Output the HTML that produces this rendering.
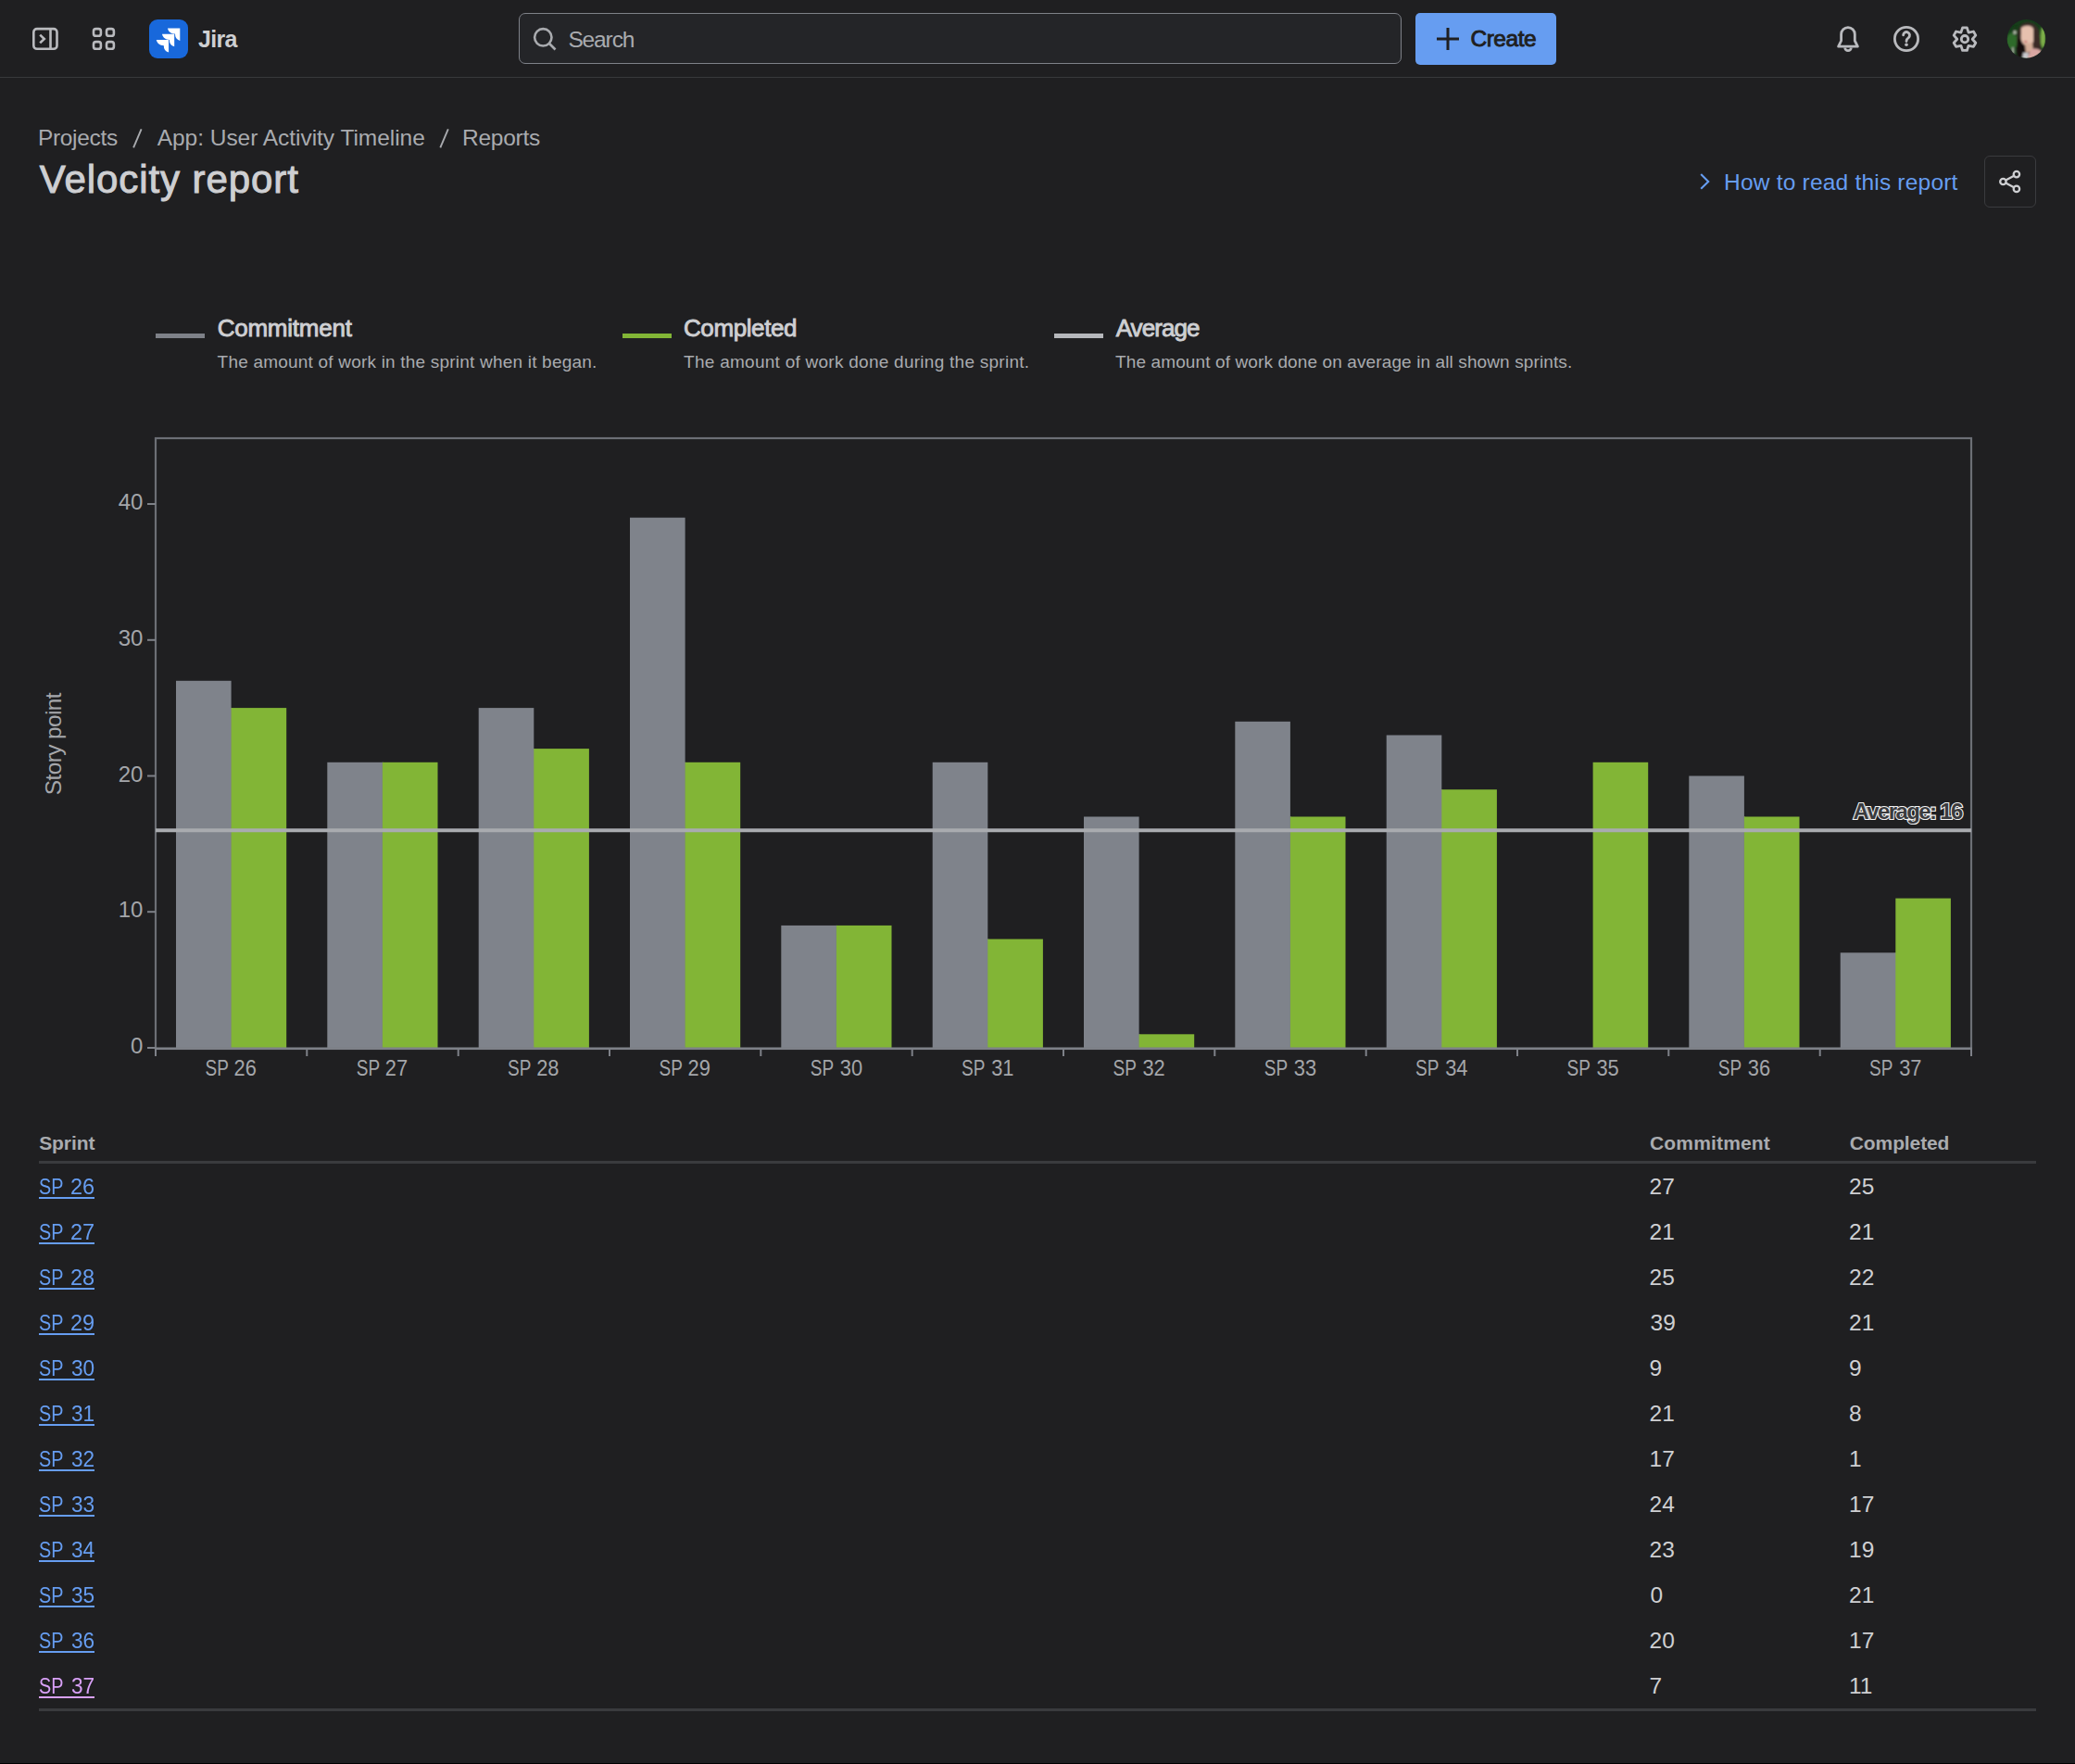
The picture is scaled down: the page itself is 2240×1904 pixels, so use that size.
<!DOCTYPE html>
<html>
<head>
<meta charset="utf-8">
<style>
html,body{margin:0;padding:0;}
body{width:2240px;height:1904px;background:#1f1f21;position:relative;overflow:hidden;font-family:"Liberation Sans",sans-serif;color:#cecfd2;}
.a{position:absolute;white-space:nowrap;line-height:1;}
#hdr{position:absolute;left:0;top:0;width:2240px;height:83px;background:#1f1f21;border-bottom:1px solid #38393b;}
#search{position:absolute;left:560px;top:14px;width:951px;height:53px;border:1.5px solid #7e8188;border-radius:7px;background:#242528;}
#create{position:absolute;left:1528px;top:14px;width:152px;height:56px;border-radius:5px;background:#669df1;}
#share{position:absolute;left:2142px;top:168px;width:53.6px;height:53.6px;border:1.2px solid #3a3b3e;border-radius:6px;}
.hline{position:absolute;height:3px;background:#3a3b3e;}
.lnk{color:#669df1;text-decoration:underline;text-decoration-thickness:2px;text-underline-offset:3px;}
</style>
</head>
<body>
<div id="hdr"></div>
<!-- header icons -->
<svg class="a" style="left:0;top:0;z-index:5" width="2240" height="84">
  <g fill="none" stroke="#b9babe" stroke-width="2.6">
    <rect x="36.3" y="31.1" width="25.2" height="21.7" rx="3.6"/>
    <line x1="54.5" y1="31" x2="54.5" y2="53"/>
    <polyline points="43.2,37.6 47.8,42 43.2,46.4"/>
    <rect x="101" y="31.1" width="7.9" height="7.7" rx="2.6"/>
    <rect x="115" y="31.1" width="7.9" height="7.7" rx="2.6"/>
    <rect x="101" y="45.1" width="7.9" height="7.7" rx="2.6"/>
    <rect x="115" y="45.1" width="7.9" height="7.7" rx="2.6"/>
  </g>
  <g transform="translate(161,21)">
    <rect x="0" y="0" width="42" height="42" rx="9" fill="#1868db"/>
    <g fill="#ffffff">
      <path d="M20 9.4 H33.3 V23 C29.6 22 28 19.5 28 15.6 C24 15.6 20.8 13.4 20 9.4 Z"/>
      <path d="M14 15.8 H27.2 V29.3 C23.5 28.3 21.9 25.8 21.9 21.9 C17.9 21.9 14.8 19.7 14 15.8 Z"/>
      <path d="M7.8 22.1 H21.1 V35.6 C17.4 34.6 15.8 32.1 15.8 28.2 C11.8 28.2 8.6 26 7.8 22.1 Z"/>
    </g>
  </g>
  <!-- search icon -->
  <g fill="none" stroke="#a9abaf" stroke-width="2.6">
    <circle cx="586.3" cy="40.3" r="9.2"/>
    <line x1="593" y1="47" x2="599.5" y2="53.5"/>
  </g>
  <!-- plus -->
  <g stroke="#1f1f21" stroke-width="3">
    <line x1="1551" y1="42" x2="1575" y2="42"/>
    <line x1="1563" y1="30" x2="1563" y2="54"/>
  </g>
  <!-- bell -->
  <g fill="none" stroke="#b9babe" stroke-width="2.8" stroke-linejoin="round">
    <path d="M1984.6 50.2 L1987.6 44 V37 A7.35 7.35 0 0 1 2002.3 37 V44 L2005.4 50.2 Z"/>
    <path d="M1991.7 51.4 A3.3 3.3 0 0 0 1998.3 51.4"/>
    <circle cx="2058" cy="42" r="12.6"/>
    <path d="M2054.6 37.8 A3.45 3.45 0 1 1 2060.3 40.6 C2058.7 41.7 2058 42.6 2058 44.6" stroke-linecap="round"/>
  </g>
  <circle cx="2058" cy="48.3" r="1.8" fill="#b9babe"/>
  <!-- gear -->
  <g fill="none" stroke="#b9babe" stroke-width="2.8" stroke-linejoin="round">
    <path d="M2116.90 35.10 L2118.61 29.93 L2123.39 29.93 L2125.10 35.10 L2130.43 34.00 L2132.82 38.13 L2129.20 42.20 L2132.82 46.27 L2130.43 50.40 L2125.10 49.30 L2123.39 54.47 L2118.61 54.47 L2116.90 49.30 L2111.57 50.40 L2109.18 46.27 L2112.80 42.20 L2109.18 38.13 L2111.57 34.00 Z"/>
    <circle cx="2121" cy="42.2" r="3.7"/>
  </g>
  <!-- avatar -->
  <defs>
    <clipPath id="avc"><circle cx="2187.5" cy="41.9" r="20.8"/></clipPath>
    <filter id="avblur" x="-10%" y="-10%" width="120%" height="120%"><feGaussianBlur stdDeviation="1.1"/></filter>
  </defs>
  <g clip-path="url(#avc)">
    <rect x="2166" y="20" width="44" height="45" fill="#173d1b"/>
    <g filter="url(#avblur)">
      <ellipse cx="2172" cy="44" rx="6" ry="9" fill="#2f6a2c"/>
      <ellipse cx="2176" cy="33" rx="4" ry="5" fill="#143a16"/>
      <ellipse cx="2175" cy="35" rx="1.8" ry="2" fill="#b9c0b0"/>
      <ellipse cx="2173" cy="55" rx="1.5" ry="4" fill="#a9b0a0"/>
      <ellipse cx="2205.5" cy="40" rx="2.8" ry="12" fill="#7fb04a"/>
      <path d="M2178 60 C2176 45 2177 30 2183 26 C2190 22 2198 25 2201 33 C2203 42 2203 52 2205 62 L2190 64 Z" fill="#3a2b27"/>
      <path d="M2178 62 C2176 50 2178 38 2182 32 L2186 40 C2184 48 2186 56 2190 64 Z" fill="#17110f"/>
      <path d="M2182 30 C2186 27 2193 27 2195 31 L2195 45 C2194 48 2190 50 2187 49 C2184 48 2182 45 2181.5 41 Z" fill="#e6c1ae"/>
      <ellipse cx="2186.8" cy="45" rx="1.6" ry="0.9" fill="#c0545a"/>
      <path d="M2186 47 L2194 46 L2195 55 L2187 57 Z" fill="#d6ad98"/>
      <path d="M2188 64 L2192 54 C2196 51 2202 53 2206 57 L2206 66 Z" fill="#d9a6a2"/>
      <path d="M2183 64 L2184 57 L2190 57 L2189 64 Z" fill="#c9c9cd"/>
    </g>
  </g>
</svg>
<div id="search"></div>
<div id="create"></div>

<!-- page header -->
<svg class="a" style="left:0;top:120px" width="600" height="50"><g stroke="#a9abaf" stroke-width="1.9"><line x1="144.1" y1="39.4" x2="152.6" y2="19.3"/><line x1="475.3" y1="39.4" x2="483.8" y2="19.3"/></g></svg>

<svg class="a" style="left:1830px;top:180px" width="24" height="32"><polyline points="6.2,8 14.2,15.9 6.2,23.8" fill="none" stroke="#669df1" stroke-width="2.1"/></svg>
<div id="share"></div>
<svg class="a" style="left:2142px;top:168px" width="56" height="56">
  <g fill="none" stroke="#cecfd2" stroke-width="2.3">
    <circle cx="20.4" cy="28" r="3.2"/>
    <circle cx="34.9" cy="20.1" r="3.2"/>
    <circle cx="34.9" cy="35.9" r="3.2"/>
    <line x1="23.2" y1="26.4" x2="32.1" y2="21.7"/>
    <line x1="23.2" y1="29.6" x2="32.1" y2="34.3"/>
  </g>
</svg>

<!-- legend -->
<div class="a" style="left:168px;top:360px;width:53px;height:5px;background:#7e8188;"></div>
<div class="a" style="left:672px;top:360px;width:53px;height:5px;background:#82b536;"></div>
<div class="a" style="left:1138px;top:360px;width:53px;height:5px;background:#b5b7bb;"></div>

<!-- CHART -->
<svg class="a" id="chart" style="left:0;top:0;font-family:'Liberation Sans',sans-serif" width="2240" height="1200">
<rect x="190.0" y="734.8" width="59.6" height="396.2" fill="#7f838b"/>
<rect x="249.1" y="764.1" width="1.5" height="366.9" fill="#7f838b"/>
<rect x="249.6" y="764.1" width="59.6" height="366.9" fill="#82b536"/>
<rect x="353.3" y="822.8" width="59.6" height="308.2" fill="#7f838b"/>
<rect x="412.4" y="822.8" width="1.5" height="308.2" fill="#7f838b"/>
<rect x="412.9" y="822.8" width="59.6" height="308.2" fill="#82b536"/>
<rect x="516.7" y="764.1" width="59.6" height="366.9" fill="#7f838b"/>
<rect x="575.8" y="808.1" width="1.5" height="322.9" fill="#7f838b"/>
<rect x="576.3" y="808.1" width="59.6" height="322.9" fill="#82b536"/>
<rect x="680.0" y="558.7" width="59.6" height="572.3" fill="#7f838b"/>
<rect x="739.1" y="822.8" width="1.5" height="308.2" fill="#7f838b"/>
<rect x="739.6" y="822.8" width="59.6" height="308.2" fill="#82b536"/>
<rect x="843.3" y="998.9" width="59.6" height="132.1" fill="#7f838b"/>
<rect x="902.4" y="998.9" width="1.5" height="132.1" fill="#7f838b"/>
<rect x="902.9" y="998.9" width="59.6" height="132.1" fill="#82b536"/>
<rect x="1006.7" y="822.8" width="59.6" height="308.2" fill="#7f838b"/>
<rect x="1065.8" y="1013.6" width="1.5" height="117.4" fill="#7f838b"/>
<rect x="1066.3" y="1013.6" width="59.6" height="117.4" fill="#82b536"/>
<rect x="1170.0" y="881.5" width="59.6" height="249.5" fill="#7f838b"/>
<rect x="1229.1" y="1116.3" width="1.5" height="14.7" fill="#7f838b"/>
<rect x="1229.6" y="1116.3" width="59.6" height="14.7" fill="#82b536"/>
<rect x="1333.3" y="778.8" width="59.6" height="352.2" fill="#7f838b"/>
<rect x="1392.4" y="881.5" width="1.5" height="249.5" fill="#7f838b"/>
<rect x="1392.9" y="881.5" width="59.6" height="249.5" fill="#82b536"/>
<rect x="1496.7" y="793.5" width="59.6" height="337.5" fill="#7f838b"/>
<rect x="1555.8" y="852.2" width="1.5" height="278.8" fill="#7f838b"/>
<rect x="1556.3" y="852.2" width="59.6" height="278.8" fill="#82b536"/>
<rect x="1719.6" y="822.8" width="59.6" height="308.2" fill="#82b536"/>
<rect x="1823.3" y="837.5" width="59.6" height="293.5" fill="#7f838b"/>
<rect x="1882.4" y="881.5" width="1.5" height="249.5" fill="#7f838b"/>
<rect x="1882.9" y="881.5" width="59.6" height="249.5" fill="#82b536"/>
<rect x="1986.7" y="1028.3" width="59.6" height="102.7" fill="#7f838b"/>
<rect x="2045.8" y="1028.3" width="1.5" height="102.7" fill="#7f838b"/>
<rect x="2046.3" y="969.6" width="59.6" height="161.4" fill="#82b536"/>
<rect x="168" y="473" width="1960" height="659" fill="none" stroke="#6c6f75" stroke-width="2.2"/>
<line x1="167" y1="1131.8" x2="2129" y2="1131.8" stroke="#7e8188" stroke-width="2.6"/>
<line x1="159" y1="1131.0" x2="168" y2="1131.0" stroke="#7e8188" stroke-width="2"/>
<line x1="159" y1="984.2" x2="168" y2="984.2" stroke="#7e8188" stroke-width="2"/>
<line x1="159" y1="837.5" x2="168" y2="837.5" stroke="#7e8188" stroke-width="2"/>
<line x1="159" y1="690.8" x2="168" y2="690.8" stroke="#7e8188" stroke-width="2"/>
<line x1="159" y1="544.0" x2="168" y2="544.0" stroke="#7e8188" stroke-width="2"/>
<line x1="168.0" y1="1132" x2="168.0" y2="1140" stroke="#7e8188" stroke-width="2"/>
<line x1="331.3" y1="1132" x2="331.3" y2="1140" stroke="#7e8188" stroke-width="2"/>
<line x1="494.7" y1="1132" x2="494.7" y2="1140" stroke="#7e8188" stroke-width="2"/>
<line x1="658.0" y1="1132" x2="658.0" y2="1140" stroke="#7e8188" stroke-width="2"/>
<line x1="821.3" y1="1132" x2="821.3" y2="1140" stroke="#7e8188" stroke-width="2"/>
<line x1="984.7" y1="1132" x2="984.7" y2="1140" stroke="#7e8188" stroke-width="2"/>
<line x1="1148.0" y1="1132" x2="1148.0" y2="1140" stroke="#7e8188" stroke-width="2"/>
<line x1="1311.3" y1="1132" x2="1311.3" y2="1140" stroke="#7e8188" stroke-width="2"/>
<line x1="1474.7" y1="1132" x2="1474.7" y2="1140" stroke="#7e8188" stroke-width="2"/>
<line x1="1638.0" y1="1132" x2="1638.0" y2="1140" stroke="#7e8188" stroke-width="2"/>
<line x1="1801.3" y1="1132" x2="1801.3" y2="1140" stroke="#7e8188" stroke-width="2"/>
<line x1="1964.7" y1="1132" x2="1964.7" y2="1140" stroke="#7e8188" stroke-width="2"/>
<line x1="2128.0" y1="1132" x2="2128.0" y2="1140" stroke="#7e8188" stroke-width="2"/>
<text transform="translate(221.46,1161.3) scale(0.809,1)" font-size="23.5" fill="#a4a6aa">SP</text>
<text transform="translate(252.54,1161.3) scale(0.93,1)" font-size="23.5" fill="#a4a6aa">26</text>
<text transform="translate(384.79,1161.3) scale(0.809,1)" font-size="23.5" fill="#a4a6aa">SP</text>
<text transform="translate(415.87,1161.3) scale(0.93,1)" font-size="23.5" fill="#a4a6aa">27</text>
<text transform="translate(548.12,1161.3) scale(0.809,1)" font-size="23.5" fill="#a4a6aa">SP</text>
<text transform="translate(579.20,1161.3) scale(0.93,1)" font-size="23.5" fill="#a4a6aa">28</text>
<text transform="translate(711.46,1161.3) scale(0.809,1)" font-size="23.5" fill="#a4a6aa">SP</text>
<text transform="translate(742.54,1161.3) scale(0.93,1)" font-size="23.5" fill="#a4a6aa">29</text>
<text transform="translate(874.79,1161.3) scale(0.809,1)" font-size="23.5" fill="#a4a6aa">SP</text>
<text transform="translate(906.80,1161.3) scale(0.93,1)" font-size="23.5" fill="#a4a6aa">30</text>
<text transform="translate(1038.12,1161.3) scale(0.809,1)" font-size="23.5" fill="#a4a6aa">SP</text>
<text transform="translate(1070.13,1161.3) scale(0.93,1)" font-size="23.5" fill="#a4a6aa">31</text>
<text transform="translate(1201.46,1161.3) scale(0.809,1)" font-size="23.5" fill="#a4a6aa">SP</text>
<text transform="translate(1233.47,1161.3) scale(0.93,1)" font-size="23.5" fill="#a4a6aa">32</text>
<text transform="translate(1364.79,1161.3) scale(0.809,1)" font-size="23.5" fill="#a4a6aa">SP</text>
<text transform="translate(1396.80,1161.3) scale(0.93,1)" font-size="23.5" fill="#a4a6aa">33</text>
<text transform="translate(1528.12,1161.3) scale(0.809,1)" font-size="23.5" fill="#a4a6aa">SP</text>
<text transform="translate(1560.13,1161.3) scale(0.93,1)" font-size="23.5" fill="#a4a6aa">34</text>
<text transform="translate(1691.46,1161.3) scale(0.809,1)" font-size="23.5" fill="#a4a6aa">SP</text>
<text transform="translate(1723.47,1161.3) scale(0.93,1)" font-size="23.5" fill="#a4a6aa">35</text>
<text transform="translate(1854.79,1161.3) scale(0.809,1)" font-size="23.5" fill="#a4a6aa">SP</text>
<text transform="translate(1886.80,1161.3) scale(0.93,1)" font-size="23.5" fill="#a4a6aa">36</text>
<text transform="translate(2018.12,1161.3) scale(0.809,1)" font-size="23.5" fill="#a4a6aa">SP</text>
<text transform="translate(2050.13,1161.3) scale(0.93,1)" font-size="23.5" fill="#a4a6aa">37</text>
<text x="141.00" y="1137.20" font-size="24" fill="#a4a6aa">0</text>
<text x="127.65" y="990.45" font-size="24" fill="#a4a6aa">10</text>
<text x="127.65" y="843.70" font-size="24" fill="#a4a6aa">20</text>
<text x="127.65" y="696.95" font-size="24" fill="#a4a6aa">30</text>
<text x="127.65" y="550.20" font-size="24" fill="#a4a6aa">40</text>
<line x1="168" y1="896.2" x2="2128" y2="896.2" stroke="#a9abaf" stroke-width="4"/>
<text x="2000.50" y="884.0" font-size="24" font-weight="bold" fill="#3a3b3e" stroke="#f4f4f4" stroke-width="2.2" paint-order="stroke" letter-spacing="-1.634">Average: 16</text>
<text x="0" y="0" transform="translate(66.0,858.2) rotate(-90)" font-size="24.5" fill="#a4a6aa" letter-spacing="-0.631">Story point</text>
</svg>

<!-- TABLE -->
<div class="hline" style="left:42px;top:1253px;width:2156px;"></div>
<div class="hline" style="left:42px;top:1844px;width:2156px;"></div>
<div class="a" style="left:0;top:1903px;width:2240px;height:1px;background:#000;"></div>
<div class="a" style="left:613.40px;top:31.26px;font-size:24.5px;color:#a9abaf;letter-spacing:-1.120px;">Search</div>
<div class="a" style="left:1587.45px;top:30.26px;font-size:24.5px;color:#1f1f21;-webkit-text-stroke:0.9px #1f1f21;letter-spacing:-0.462px;">Create</div>
<div class="a" style="left:214.10px;top:29.84px;font-size:25px;color:#cecfd2;font-weight:bold;letter-spacing:-0.693px;">Jira</div>
<div class="a" style="left:41.00px;top:136.56px;font-size:24.5px;color:#a9abaf;letter-spacing:-0.336px;">Projects</div>
<div class="a" style="left:169.70px;top:136.56px;font-size:24.5px;color:#a9abaf;letter-spacing:-0.034px;">App: User Activity Timeline</div>
<div class="a" style="left:499.00px;top:136.56px;font-size:24.5px;color:#a9abaf;letter-spacing:-0.256px;">Reports</div>
<div class="a" style="left:42.80px;top:173.45px;font-size:42px;color:#cecfd2;-webkit-text-stroke:1.0px #cecfd2;letter-spacing:0.931px;">Velocity report</div>
<div class="a" style="left:1861.00px;top:185.06px;font-size:24.5px;color:#669df1;letter-spacing:0.208px;">How to read this report</div>
<div class="a" style="left:234.65px;top:341.09px;font-size:26px;color:#cecfd2;-webkit-text-stroke:0.9px #cecfd2;letter-spacing:-0.237px;">Commitment</div>
<div class="a" style="left:234.60px;top:380.82px;font-size:19px;color:#a9abaf;letter-spacing:0.204px;">The amount of work in the sprint when it began.</div>
<div class="a" style="left:737.95px;top:341.09px;font-size:26px;color:#cecfd2;-webkit-text-stroke:0.9px #cecfd2;letter-spacing:-0.397px;">Completed</div>
<div class="a" style="left:738.10px;top:380.82px;font-size:19px;color:#a9abaf;letter-spacing:0.261px;">The amount of work done during the sprint.</div>
<div class="a" style="left:1204.65px;top:341.09px;font-size:26px;color:#cecfd2;-webkit-text-stroke:0.9px #cecfd2;letter-spacing:-0.935px;">Average</div>
<div class="a" style="left:1204.10px;top:380.82px;font-size:19px;color:#a9abaf;letter-spacing:0.113px;">The amount of work done on average in all shown sprints.</div>
<div class="a" style="left:42.20px;top:1223.32px;font-size:21px;color:#a9abaf;font-weight:bold;letter-spacing:-0.094px;">Sprint</div>
<div class="a" style="left:1781.00px;top:1223.32px;font-size:21px;color:#a9abaf;font-weight:bold;letter-spacing:0.162px;">Commitment</div>
<div class="a" style="left:1996.80px;top:1223.32px;font-size:21px;color:#a9abaf;font-weight:bold;letter-spacing:-0.110px;">Completed</div>
<div class="a" style="left:41.99px;top:1268.96px;font-size:24.5px;color:#669df1;transform-origin:0 0;transform:scaleX(0.810);">SP</div>
<div class="a" style="left:75.74px;top:1268.96px;font-size:24.5px;color:#669df1;transform-origin:0 0;transform:scaleX(0.960);">26</div>
<div class="a" style="left:42.0px;top:1291.9px;width:60.3px;height:2px;background:#669df1;"></div>
<div class="a" style="left:1780.50px;top:1268.96px;font-size:24.5px;color:#cecfd2;">27</div>
<div class="a" style="left:1996.00px;top:1268.96px;font-size:24.5px;color:#cecfd2;">25</div>
<div class="a" style="left:41.99px;top:1317.96px;font-size:24.5px;color:#669df1;transform-origin:0 0;transform:scaleX(0.810);">SP</div>
<div class="a" style="left:75.74px;top:1317.96px;font-size:24.5px;color:#669df1;transform-origin:0 0;transform:scaleX(0.960);">27</div>
<div class="a" style="left:42.0px;top:1340.9px;width:60.3px;height:2px;background:#669df1;"></div>
<div class="a" style="left:1780.50px;top:1317.96px;font-size:24.5px;color:#cecfd2;">21</div>
<div class="a" style="left:1996.00px;top:1317.96px;font-size:24.5px;color:#cecfd2;">21</div>
<div class="a" style="left:41.99px;top:1366.96px;font-size:24.5px;color:#669df1;transform-origin:0 0;transform:scaleX(0.810);">SP</div>
<div class="a" style="left:75.74px;top:1366.96px;font-size:24.5px;color:#669df1;transform-origin:0 0;transform:scaleX(0.960);">28</div>
<div class="a" style="left:42.0px;top:1389.9px;width:60.3px;height:2px;background:#669df1;"></div>
<div class="a" style="left:1780.50px;top:1366.96px;font-size:24.5px;color:#cecfd2;">25</div>
<div class="a" style="left:1996.00px;top:1366.96px;font-size:24.5px;color:#cecfd2;">22</div>
<div class="a" style="left:41.99px;top:1415.96px;font-size:24.5px;color:#669df1;transform-origin:0 0;transform:scaleX(0.810);">SP</div>
<div class="a" style="left:75.74px;top:1415.96px;font-size:24.5px;color:#669df1;transform-origin:0 0;transform:scaleX(0.960);">29</div>
<div class="a" style="left:42.0px;top:1438.9px;width:60.3px;height:2px;background:#669df1;"></div>
<div class="a" style="left:1781.50px;top:1415.96px;font-size:24.5px;color:#cecfd2;">39</div>
<div class="a" style="left:1996.00px;top:1415.96px;font-size:24.5px;color:#cecfd2;">21</div>
<div class="a" style="left:41.99px;top:1464.96px;font-size:24.5px;color:#669df1;transform-origin:0 0;transform:scaleX(0.810);">SP</div>
<div class="a" style="left:76.70px;top:1464.96px;font-size:24.5px;color:#669df1;transform-origin:0 0;transform:scaleX(0.924);">30</div>
<div class="a" style="left:42.0px;top:1487.9px;width:60.3px;height:2px;background:#669df1;"></div>
<div class="a" style="left:1780.50px;top:1464.96px;font-size:24.5px;color:#cecfd2;">9</div>
<div class="a" style="left:1996.00px;top:1464.96px;font-size:24.5px;color:#cecfd2;">9</div>
<div class="a" style="left:41.99px;top:1513.96px;font-size:24.5px;color:#669df1;transform-origin:0 0;transform:scaleX(0.810);">SP</div>
<div class="a" style="left:76.70px;top:1513.96px;font-size:24.5px;color:#669df1;transform-origin:0 0;transform:scaleX(0.924);">31</div>
<div class="a" style="left:42.0px;top:1536.9px;width:60.3px;height:2px;background:#669df1;"></div>
<div class="a" style="left:1780.50px;top:1513.96px;font-size:24.5px;color:#cecfd2;">21</div>
<div class="a" style="left:1996.00px;top:1513.96px;font-size:24.5px;color:#cecfd2;">8</div>
<div class="a" style="left:41.99px;top:1562.96px;font-size:24.5px;color:#669df1;transform-origin:0 0;transform:scaleX(0.810);">SP</div>
<div class="a" style="left:76.70px;top:1562.96px;font-size:24.5px;color:#669df1;transform-origin:0 0;transform:scaleX(0.924);">32</div>
<div class="a" style="left:42.0px;top:1585.9px;width:60.3px;height:2px;background:#669df1;"></div>
<div class="a" style="left:1780.50px;top:1562.96px;font-size:24.5px;color:#cecfd2;">17</div>
<div class="a" style="left:1996.00px;top:1562.96px;font-size:24.5px;color:#cecfd2;">1</div>
<div class="a" style="left:41.99px;top:1611.96px;font-size:24.5px;color:#669df1;transform-origin:0 0;transform:scaleX(0.810);">SP</div>
<div class="a" style="left:76.70px;top:1611.96px;font-size:24.5px;color:#669df1;transform-origin:0 0;transform:scaleX(0.924);">33</div>
<div class="a" style="left:42.0px;top:1634.9px;width:60.3px;height:2px;background:#669df1;"></div>
<div class="a" style="left:1780.50px;top:1611.96px;font-size:24.5px;color:#cecfd2;">24</div>
<div class="a" style="left:1996.00px;top:1611.96px;font-size:24.5px;color:#cecfd2;">17</div>
<div class="a" style="left:41.99px;top:1660.96px;font-size:24.5px;color:#669df1;transform-origin:0 0;transform:scaleX(0.810);">SP</div>
<div class="a" style="left:76.70px;top:1660.96px;font-size:24.5px;color:#669df1;transform-origin:0 0;transform:scaleX(0.924);">34</div>
<div class="a" style="left:42.0px;top:1683.9px;width:60.3px;height:2px;background:#669df1;"></div>
<div class="a" style="left:1780.50px;top:1660.96px;font-size:24.5px;color:#cecfd2;">23</div>
<div class="a" style="left:1996.00px;top:1660.96px;font-size:24.5px;color:#cecfd2;">19</div>
<div class="a" style="left:41.99px;top:1709.96px;font-size:24.5px;color:#669df1;transform-origin:0 0;transform:scaleX(0.810);">SP</div>
<div class="a" style="left:76.70px;top:1709.96px;font-size:24.5px;color:#669df1;transform-origin:0 0;transform:scaleX(0.924);">35</div>
<div class="a" style="left:42.0px;top:1732.9px;width:60.3px;height:2px;background:#669df1;"></div>
<div class="a" style="left:1781.50px;top:1709.96px;font-size:24.5px;color:#cecfd2;">0</div>
<div class="a" style="left:1996.00px;top:1709.96px;font-size:24.5px;color:#cecfd2;">21</div>
<div class="a" style="left:41.99px;top:1758.96px;font-size:24.5px;color:#669df1;transform-origin:0 0;transform:scaleX(0.810);">SP</div>
<div class="a" style="left:76.70px;top:1758.96px;font-size:24.5px;color:#669df1;transform-origin:0 0;transform:scaleX(0.924);">36</div>
<div class="a" style="left:42.0px;top:1781.9px;width:60.3px;height:2px;background:#669df1;"></div>
<div class="a" style="left:1780.50px;top:1758.96px;font-size:24.5px;color:#cecfd2;">20</div>
<div class="a" style="left:1996.00px;top:1758.96px;font-size:24.5px;color:#cecfd2;">17</div>
<div class="a" style="left:41.99px;top:1807.96px;font-size:24.5px;color:#d8a0f7;transform-origin:0 0;transform:scaleX(0.810);">SP</div>
<div class="a" style="left:76.70px;top:1807.96px;font-size:24.5px;color:#d8a0f7;transform-origin:0 0;transform:scaleX(0.924);">37</div>
<div class="a" style="left:42.0px;top:1830.9px;width:60.3px;height:2px;background:#d8a0f7;"></div>
<div class="a" style="left:1780.50px;top:1807.96px;font-size:24.5px;color:#cecfd2;">7</div>
<div class="a" style="left:1996.00px;top:1807.96px;font-size:24.5px;color:#cecfd2;">11</div>
</body>
</html>
